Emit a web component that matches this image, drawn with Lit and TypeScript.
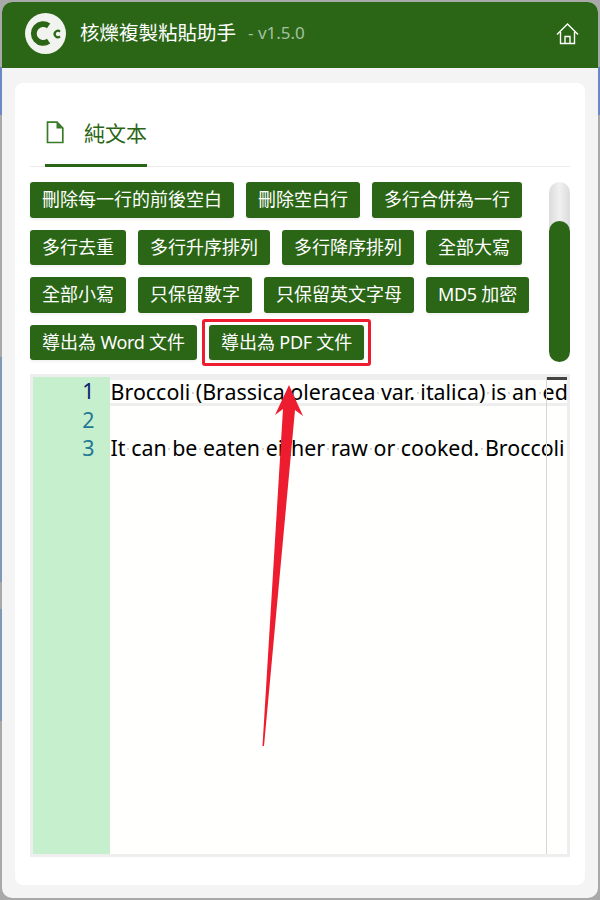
import { LitElement, html, css } from "lit";
import { customElement } from "lit/decorators.js";

const ROW_TEXT = [
  "Broccoli (Brassica oleracea var. italica) is an ed",
  "",
  "It can be eaten either raw or cooked. Broccoli",
];
const BUTTONS = [
  "刪除每一行的前後空白", "刪除空白行", "多行合併為一行",
  "多行去重", "多行升序排列", "多行降序排列", "全部大寫",
  "全部小寫", "只保留數字", "只保留英文字母", "MD5 加密",
  "導出為 Word 文件", "導出為 PDF 文件",
];

@customElement("app-root")
export class AppRoot extends LitElement {
  static styles = css`
    :host {
      display: block;
      width: 600px;
      height: 900px;
      box-sizing: border-box;
      padding: 2px;
      position: relative;
      overflow: hidden;
      font-family: "Noto Sans", "Noto Sans CJK TC", sans-serif;
      background-color: #a9a9a9;
      background-repeat: no-repeat;
      background-image:
        linear-gradient(#6c88c6, #6c88c6),
        linear-gradient(#6c88c6, #6c88c6),
        linear-gradient(#7f99b5, #7f99b5),
        linear-gradient(#7f99b5, #7f99b5);
      background-size: 3px 48px, 3px 48px, 3px 225px, 3px 112px;
      background-position: 0 67px, 100% 67px, 0 357px, 0 609px;
    }
    .window {
      height: 896px;
      display: flex;
      flex-direction: column;
      background: #f4f4f4;
      border-radius: 10px;
      overflow: hidden;
    }
    .header {
      flex: none;
      height: 66px;
      box-sizing: border-box;
      display: flex;
      align-items: center;
      background: #2b6516;
      padding: 0 19px 4px 23px;
      color: #fff;
    }
    .logo { width: 41px; height: 41px; flex: none; }
    .title { margin-left: 14px; font-size: 19.5px; line-height: 28px; white-space: nowrap; }
    .version { margin-left: 12px; font-size: 17px; line-height: 28px; color: #a4c1a0; white-space: nowrap; }
    .home { margin-left: auto; width: 23px; height: 23px; flex: none; }
    .card {
      flex: 1;
      margin: 15px 13px 13px;
      background: #fff;
      border-radius: 8px;
      padding: 0 15px 28px;
      display: flex;
      flex-direction: column;
      min-height: 0;
    }
    .tabs {
      flex: none;
      height: 84px;
      box-sizing: border-box;
      border-bottom: 1px solid #ececec;
      padding-left: 15px;
      display: flex;
      align-items: flex-end;
    }
    .tab {
      width: 102px;
      height: 84px;
      box-sizing: border-box;
      margin-bottom: -1px;
      border-bottom: 3px solid #2b6516;
      display: flex;
      align-items: center;
      color: #2b6516;
      font-size: 21px;
      padding-top: 17px;
    }
    .tab svg { width: 18px; height: 23px; flex: none; margin: 0 20px 0 1px; }
    .tab span { white-space: nowrap; }
    .tools {
      flex: none;
      display: flex;
      justify-content: space-between;
      margin-top: 15px;
      height: 180px;
    }
    .buttons {
      width: 510px;
      display: flex;
      flex-wrap: wrap;
      align-content: flex-start;
      gap: 12px;
    }
    .btn {
      position: relative;
      height: 35.5px;
      line-height: 35px;
      padding: 0 12px;
      background: #2b6516;
      color: #fff;
      font-size: 18px;
      border-radius: 3px;
      box-shadow: 0 2px 3px rgba(0, 0, 0, 0.06);
      white-space: pre;
    }
    .lat { letter-spacing: -0.3px; }
    .btn.mark::after {
      content: "";
      position: absolute;
      inset: -6px -7px -6px -6.5px;
      border: 3.5px solid #ed1c2e;
      border-radius: 3px;
    }
    .track {
      width: 21px;
      height: 180px;
      border-radius: 11px;
      background: linear-gradient(90deg, #dcdcdc, #f0f0f0 50%, #dcdcdc);
      display: flex;
      align-items: flex-end;
    }
    .thumb {
      width: 21px;
      height: 141px;
      border-radius: 11px;
      background: #2b6516;
    }
    .editor {
      flex: 1;
      min-height: 0;
      margin-top: 12px;
      border: 3px solid #eeeeee;
      display: flex;
      background: #fffffd;
      overflow: hidden;
      position: relative;
    }
    .gutter {
      flex: none;
      width: 77px;
      background: #c6efce;
      box-sizing: border-box;
      padding-right: 15.5px;
      text-align: right;
      color: #237893;
      font-size: 21.4px;
    }
    .gutter div { height: 28.5px; line-height: 28.5px; }
    .gutter .on { color: #0b216f; }
    .code {
      flex: 1;
      min-width: 0;
      overflow: hidden;
      color: #000;
      font-size: 21.4px;
    }
    .line {
      height: 28.5px;
      line-height: 28.5px;
      padding-left: 0.6px;
      white-space: pre;
      box-sizing: border-box;
    }
    .line.on {
      height: 29px;
      line-height: 23px;
      margin-bottom: -0.5px;
      word-spacing: -0.15px;
      border-top: 3px solid #eeeeee;
      border-bottom: 3px solid #eeeeee;
    }
    .sp { position: relative; }
    .sp::after {
      content: "";
      position: absolute;
      left: 50%;
      top: 50%;
      width: 2px;
      height: 2px;
      margin: 0 0 0 -1px;
      background: #d4d4d4;
    }
    .ruler {
      position: absolute;
      top: 0;
      bottom: 0;
      right: 0;
      width: 20px;
      border-left: 1px solid #d6d6d6;
    }
    .ruler::before {
      content: "";
      display: block;
      height: 3px;
      background: #444;
    }
    .arrow {
      position: absolute;
      left: 0;
      top: 0;
      width: 600px;
      height: 900px;
      pointer-events: none;
    }
  `;

  private renderLine(text: string) {
    const parts = text.split(" ");
    return parts.map((p, i) =>
      i < parts.length - 1 ? html`${p}<span class="sp"> </span>` : html`${p}`
    );
  }

  private renderLabel(text: string) {
    return text
      .split(/([A-Za-z0-9 ]+)/)
      .map((p) => (/^[A-Za-z0-9 ]+$/.test(p) ? html`<span class="lat">${p}</span>` : html`${p}`));
  }

  render() {
    return html`
      <div class="window">
        <div class="header">
          <svg class="logo" viewBox="0 0 41 41">
            <circle cx="20.5" cy="20.5" r="20.5" fill="#f1f3ef"></circle>
            <path d="M23.6 12.8 A9.4 9.4 0 1 0 23.6 28.2" fill="none" stroke="#2b6516" stroke-width="5.8"></path>
            <path d="M35 18.6 A3.2 3.2 0 1 0 35 23.4" fill="none" stroke="#2b6516" stroke-width="2.2"></path>
          </svg>
          <span class="title">核爍複製粘貼助手</span>
          <span class="version">- v1.5.0</span>
          <svg class="home" viewBox="0 0 23 23" fill="none" stroke="#fff" stroke-width="1.4">
            <path d="M1 12.5 L11.5 2 L22 12.5"></path>
            <path d="M4.5 10 V21.5 H18.5 V10"></path>
            <path d="M9 21.5 V14.5 H14 V21.5"></path>
          </svg>
        </div>
        <div class="card">
          <div class="tabs">
            <div class="tab">
              <svg viewBox="0 0 18 23">
                <path d="M1.5 1.2 H11 L16.8 7 V21.5 H1.5 Z" fill="none" stroke="#3a7a28" stroke-width="1.7"></path>
                <path d="M10.5 1 V7.5 H17 Z" fill="#3a7a28"></path>
              </svg>
              <span>純文本</span>
            </div>
          </div>
          <div class="tools">
            <div class="buttons">
              ${BUTTONS.map(
                (b) => html`<div class="btn ${b.includes("PDF") ? "mark" : ""}">${this.renderLabel(b)}</div>`
              )}
            </div>
            <div class="track"><div class="thumb"></div></div>
          </div>
          <div class="editor">
            <div class="gutter">
              ${ROW_TEXT.map((_, i) => html`<div class="${i === 0 ? "on" : ""}">${i + 1}</div>`)}
            </div>
            <div class="code">
              ${ROW_TEXT.map(
                (t, i) => html`<div class="line ${i === 0 ? "on" : ""}">${this.renderLine(t)}</div>`
              )}
            </div>
            <div class="ruler"></div>
          </div>
        </div>
      </div>
      <svg class="arrow" viewBox="0 0 600 900">
        <polygon
          fill="#ed1c2e"
          points="289,385 303,416 295,410 264,746 262.5,746 283,409 275,415"
        ></polygon>
      </svg>
    `;
  }
}
